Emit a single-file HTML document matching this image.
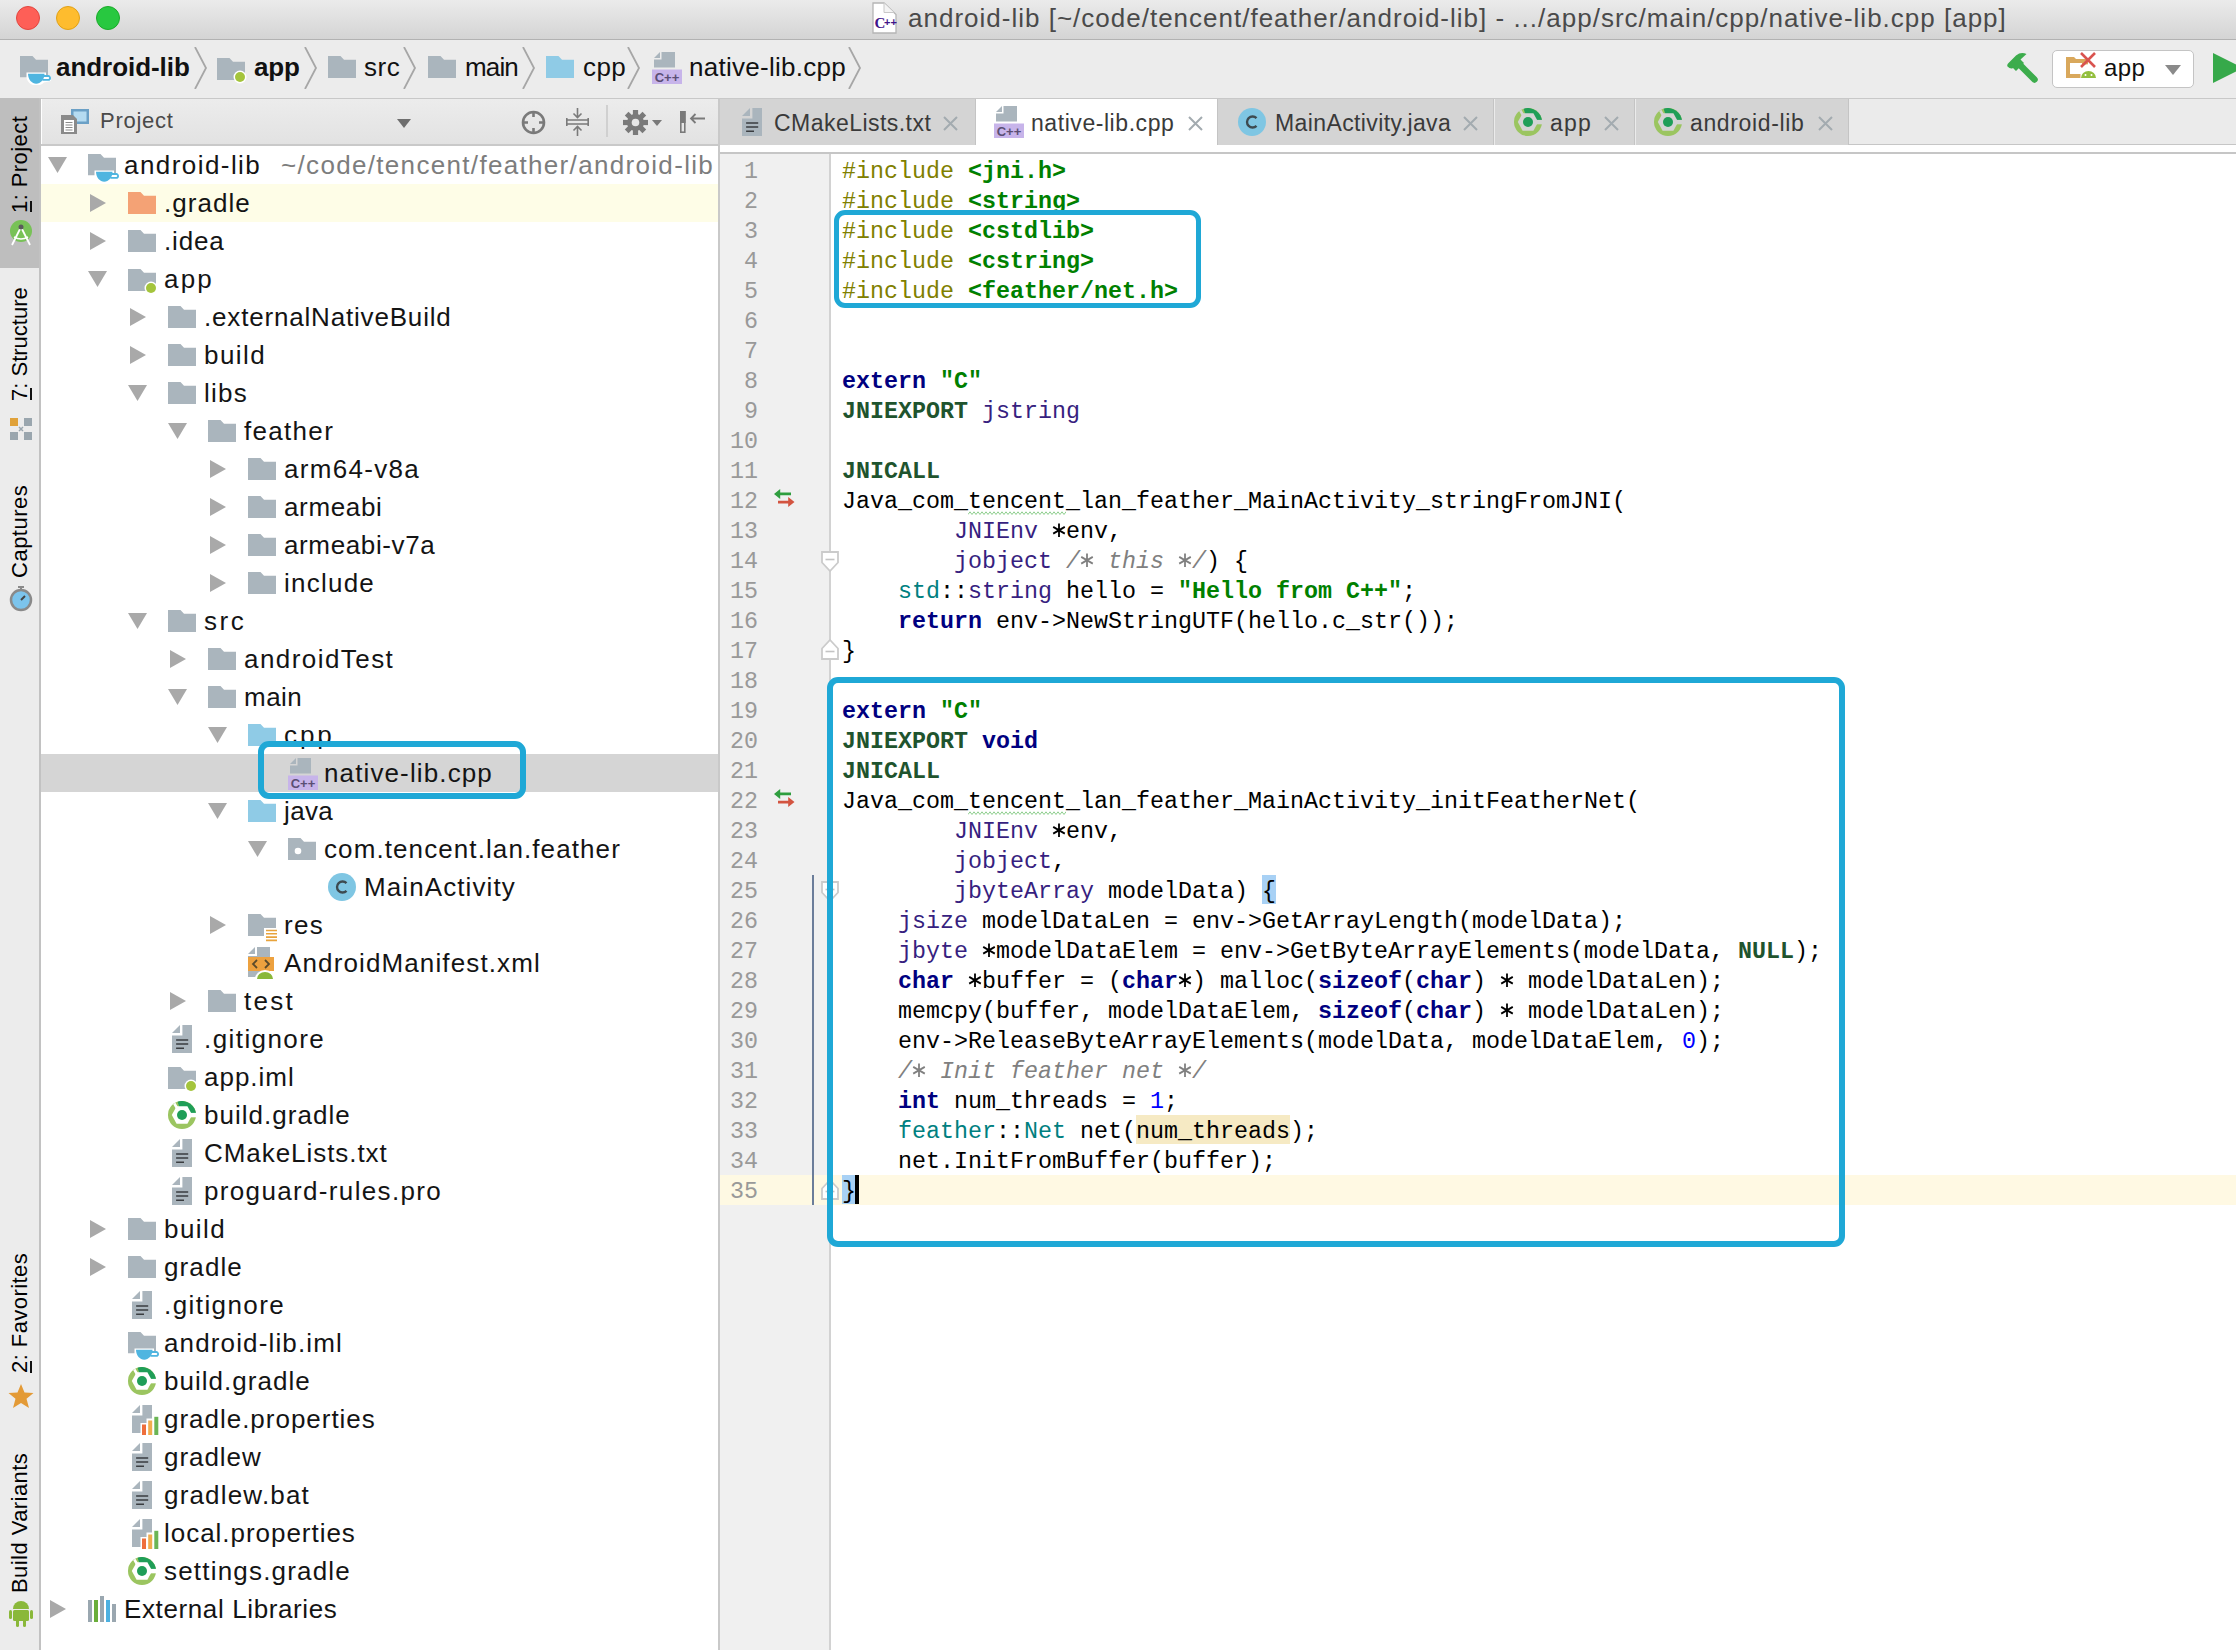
<!DOCTYPE html>
<html><head><meta charset="utf-8"><style>
html,body{margin:0;padding:0;width:2236px;height:1650px;overflow:hidden;background:#fff}
body{position:relative;font-family:'Liberation Sans', sans-serif}
.r{position:absolute;display:block}
.t{position:absolute;white-space:pre}
.code{position:absolute;font-family:'Liberation Mono', monospace;font-size:23.33px;line-height:30px;white-space:pre;color:#000}
.ast{display:inline-block;vertical-align:top;width:14px;height:30px}
.lnum{position:absolute;font-family:'Liberation Mono', monospace;font-size:23.33px;line-height:30px;color:#999;text-align:right}
</style></head><body>

<svg width="0" height="0" style="position:absolute">
<defs>
<symbol id="folder" viewBox="0 0 28 22"><path d="M0 0H12.5L16 3.7H28V22H0Z" fill="#aab5bd"/></symbol>
<symbol id="folderB" viewBox="0 0 28 22"><path d="M0 0H12.5L16 3.7H28V22H0Z" fill="#8fcbe6"/></symbol>
<symbol id="folderO" viewBox="0 0 28 22"><path d="M0 0H12.5L16 3.7H28V22H0Z" fill="#f4a275"/></symbol>
<symbol id="folderPkg" viewBox="0 0 28 22"><path d="M0 0H12.5L16 3.7H28V22H0Z" fill="#aab5bd"/><circle cx="10" cy="13" r="3.3" fill="#fff"/></symbol>
<symbol id="folderMod" viewBox="0 0 31 29"><path d="M0 0H12.5L16 3.7H28V21.3H0Z" fill="#aab5bd"/><path d="M6.5 16.5H26V19.5L31 20.5V25L24 26.5Q21 29.5 16.5 29.5Q9 29.5 6.5 22Z" fill="#fff"/><path d="M8 17.7H24.5C24.5 23.5 20.5 27.7 16.2 27.7C12 27.7 8 23.5 8 17.7Z" fill="#4fb5e0"/><path d="M23.5 20H28.2A1.9 1.9 0 0 1 28.2 23.8H22.5" fill="none" stroke="#4fb5e0" stroke-width="1.8"/></symbol>
<symbol id="folderApp" viewBox="0 0 30 26"><path d="M0 0H12.5L16 3.7H28V22H0Z" fill="#aab5bd"/><circle cx="23" cy="19" r="6.5" fill="#fff"/><circle cx="23" cy="19" r="5" fill="#a4c43c"/></symbol>
<symbol id="folderRes" viewBox="0 0 30 28"><path d="M0 0H12.5L16 3.7H28V22H0Z" fill="#aab5bd"/><rect x="16" y="14" width="14" height="14" fill="#fff"/><g stroke="#e8a33c" stroke-width="1.6"><path d="M18 16.5H29M18 19.8H29M18 23.1H29M18 26.4H29"/></g></symbol>
<symbol id="txtfile" viewBox="0 0 20 28"><path d="M10.4 0H20V28H0V10.4H10.4Z" fill="#aab5bd"/><path d="M0 8L8 0V8Z" fill="#aab5bd"/><g stroke="#3a3d40" stroke-width="1.5"><path d="M4.1 15H16.2M4.1 19.1H16.2M4.1 23.2H12"/></g></symbol>
<symbol id="propfile" viewBox="0 0 27 30"><path d="M10.4 0H20V28H0V10.4H10.4Z" fill="#aab5bd"/><path d="M0 8L8 0V8Z" fill="#aab5bd"/><path d="M8.5 30V18H14.5V13.5H20.5V10H27V30Z" fill="#fff"/><rect x="10" y="19.5" width="4" height="10.5" fill="#ee6f3d"/><rect x="16.2" y="15.5" width="4" height="14.5" fill="#f0ad4e"/><rect x="22.3" y="11.8" width="4" height="18.2" fill="#6bb555"/></symbol>
<symbol id="cppfile" viewBox="0 0 30 32"><path d="M9.5 0H23V15.5H2V7.5H9.5Z" fill="#aab5bd"/><path d="M2 6L8 0V6Z" fill="#aab5bd"/><rect x="0" y="17.5" width="30" height="14.5" fill="#c7b4ea"/><text x="15" y="30" font-family="Liberation Sans" font-size="13" font-weight="700" fill="#5a4e73" text-anchor="middle">C++</text></symbol>
<symbol id="jclass" viewBox="0 0 28 28"><circle cx="14" cy="14" r="14" fill="#7fc6e3"/><path d="M18.5 10.2A5.5 5.5 0 1 0 18.5 17.8" fill="none" stroke="#3d4a50" stroke-width="2.4"/></symbol>
<symbol id="gradle" viewBox="0 0 28 28"><mask id="gm"><rect width="28" height="28" fill="#fff"/><path d="M3.8 14L8.6 5.2H19.4L24.2 14L19.4 22.8H8.6Z" fill="#000"/><rect x="19" y="11.9" width="10" height="4.4" fill="#000"/><path d="M6.3 2.3L10.3 9.5" stroke="#000" stroke-width="2.6"/></mask><g mask="url(#gm)"><circle cx="14" cy="14" r="14" fill="#9bc560"/><path d="M14 14L9.6 0.7A14 14 0 0 1 28 14Z" fill="#1f9e58"/></g><circle cx="14" cy="14" r="5" fill="#1f9e58"/></symbol>
<symbol id="manifest" viewBox="0 0 30 32"><path d="M9 0H22V30H0V9H9Z" fill="#aab5bd"/><path d="M0 7L7 0V7Z" fill="#aab5bd"/><rect x="0" y="10" width="26" height="14" fill="#eda13f"/><path d="M9 13L5 17L9 21M17 13L21 17L17 21" fill="none" stroke="#5b4a2b" stroke-width="1.8"/><path d="M7 32A9 8 0 0 1 27 32Z" fill="#fff"/><path d="M9 32A8 7 0 0 1 25 32Z" fill="#8ab83a"/></symbol>
<symbol id="extlib" viewBox="0 0 28 26"><rect x="0" y="4" width="4" height="22" fill="#9aa7b0"/><rect x="6" y="4" width="4" height="22" fill="#6aae3a"/><rect x="12" y="0" width="4" height="26" fill="#9aa7b0"/><rect x="18" y="4" width="4" height="22" fill="#4cb0e0"/><rect x="24" y="8" width="4" height="18" fill="#9aa7b0"/></symbol>
<symbol id="triR" viewBox="0 0 16 18"><path d="M0 0L16 9L0 18Z" fill="#a9a9a9"/></symbol>
<symbol id="triD" viewBox="0 0 19 16"><path d="M0 0H19L9.5 16Z" fill="#a9a9a9"/></symbol>
<symbol id="chev" viewBox="0 0 14 42"><path d="M1 0L12 21L1 42" fill="none" stroke="#a6a6a6" stroke-width="1.8"/></symbol>
<symbol id="closeX" viewBox="0 0 15 15"><path d="M1 1L14 14M14 1L1 14" fill="none" stroke="#a3abb0" stroke-width="2"/></symbol>
</defs>
</svg>

<div class="r" style="left:0px;top:0px;width:2236px;height:39px;background:linear-gradient(#ebebeb,#d4d4d4)"></div>
<div class="r" style="left:0px;top:39px;width:2236px;height:1px;background:#b2b2b2"></div>
<div class="r" style="left:16px;top:6px;width:24px;height:24px;background:#fe5f57;border-radius:50%;box-sizing:border-box;border:1px solid #e2463f"></div>
<div class="r" style="left:56px;top:6px;width:24px;height:24px;background:#febc2e;border-radius:50%;box-sizing:border-box;border:1px solid #e1a116"></div>
<div class="r" style="left:96px;top:6px;width:24px;height:24px;background:#28c840;border-radius:50%;box-sizing:border-box;border:1px solid #1aab29"></div>
<svg class="r" style="left:871px;top:1px" width="27" height="34" viewBox="0 0 27 34"><path d="M2 2H13L25 13.5V32H2Z" fill="#fff" stroke="#b5b5b5" stroke-width="1.3"/><path d="M13 2V11.5H23" fill="#f4f4f4" stroke="#c8c8c8" stroke-width="1"/><text x="3.5" y="27" font-family="Liberation Serif" font-size="15" font-weight="700" fill="#3f1489">C</text><text x="13" y="25" font-family="Liberation Sans" font-size="11" font-weight="700" fill="#3f1489">++</text></svg>
<div class="t" style="left:908px;top:3.49px;height:31px;line-height:31px;font-family:'Liberation Sans', sans-serif;font-size:26px;font-weight:400;color:#4a4a4a;letter-spacing:1.002px;">android-lib [~/code/tencent/feather/android-lib] - .../app/src/main/cpp/native-lib.cpp [app]</div>
<div class="r" style="left:0px;top:40px;width:2236px;height:58px;background:#ececec"></div>
<div class="r" style="left:0px;top:98px;width:2236px;height:1px;background:#d0d0d0"></div>
<svg class="r" style="left:20px;top:56px;" width="31" height="29"><use href="#folderMod"/></svg>
<div class="t" style="left:56px;top:52.49px;height:31px;line-height:31px;font-family:'Liberation Sans', sans-serif;font-size:26px;font-weight:700;color:#111;letter-spacing:-0.053px;">android-lib</div>
<svg class="r" style="left:194px;top:47px;" width="14" height="42"><use href="#chev"/></svg>
<svg class="r" style="left:217px;top:57.5px;" width="30" height="26"><use href="#folderApp"/></svg>
<div class="t" style="left:254px;top:52.49px;height:31px;line-height:31px;font-family:'Liberation Sans', sans-serif;font-size:26px;font-weight:700;color:#111;letter-spacing:-0.217px;">app</div>
<svg class="r" style="left:304px;top:47px;" width="14" height="42"><use href="#chev"/></svg>
<svg class="r" style="left:328px;top:56px;" width="28" height="22"><use href="#folder"/></svg>
<div class="t" style="left:364px;top:52.49px;height:31px;line-height:31px;font-family:'Liberation Sans', sans-serif;font-size:26px;font-weight:400;color:#111;letter-spacing:0.564px;">src</div>
<svg class="r" style="left:403px;top:47px;" width="14" height="42"><use href="#chev"/></svg>
<svg class="r" style="left:428px;top:56px;" width="28" height="22"><use href="#folder"/></svg>
<div class="t" style="left:465px;top:52.49px;height:31px;line-height:31px;font-family:'Liberation Sans', sans-serif;font-size:26px;font-weight:400;color:#111;letter-spacing:-0.853px;">main</div>
<svg class="r" style="left:522px;top:47px;" width="14" height="42"><use href="#chev"/></svg>
<svg class="r" style="left:546px;top:56px;" width="28" height="22"><use href="#folderB"/></svg>
<div class="t" style="left:583px;top:52.49px;height:31px;line-height:31px;font-family:'Liberation Sans', sans-serif;font-size:26px;font-weight:400;color:#111;letter-spacing:0.439px;">cpp</div>
<svg class="r" style="left:627px;top:47px;" width="14" height="42"><use href="#chev"/></svg>
<svg class="r" style="left:652px;top:52px;" width="30" height="32"><use href="#cppfile"/></svg>
<div class="t" style="left:689px;top:52.49px;height:31px;line-height:31px;font-family:'Liberation Sans', sans-serif;font-size:26px;font-weight:400;color:#111;letter-spacing:0.277px;">native-lib.cpp</div>
<svg class="r" style="left:848px;top:47px;" width="14" height="42"><use href="#chev"/></svg>
<svg class="r" style="left:2006px;top:52px" width="34" height="32" viewBox="0 0 34 32"><path d="M14 13L28.5 27.5" stroke="#3cac4c" stroke-width="6.5" stroke-linecap="round"/><path d="M1.5 14.5Q0.5 12.5 3 10.5L10 3.5Q15 -0.5 20.5 2L14.5 7.5L18 11L10 19L7 16Q4.5 17.5 1.5 14.5Z" fill="#3cac4c"/></svg>
<div class="r" style="left:2052px;top:50px;width:142px;height:38px;background:#fff;border:1px solid #c4c4c4;border-radius:5px;box-sizing:border-box"></div>
<svg class="r" style="left:2064px;top:50px" width="34" height="30" viewBox="0 0 34 30"><path d="M2 7H10L12 9H24V28H2Z" fill="#d9a85c"/><path d="M6 13H18V24H6Z" fill="#fff"/><path d="M16.5 20A8 7.5 0 0 1 32 20V28H16.5Z" fill="#fff"/><path d="M17 28A7.5 7 0 0 1 32 28Z" fill="#93bf3e"/><circle cx="21.5" cy="25" r="1" fill="#fff"/><circle cx="27.5" cy="25" r="1" fill="#fff"/><path d="M17 3L31 17M31 3L17 17" stroke="#d9534f" stroke-width="2.6"/></svg>
<div class="t" style="left:2104px;top:53.18px;height:29px;line-height:29px;font-family:'Liberation Sans', sans-serif;font-size:24px;font-weight:400;color:#111;letter-spacing:0.377px;">app</div>
<svg class="r" style="left:2165px;top:65px" width="16" height="10"><path d="M0 0H16L8 10Z" fill="#8a8a8a"/></svg>
<svg class="r" style="left:2213px;top:53px" width="23" height="30"><path d="M0 0L30 15L0 30Z" fill="#36a94a"/></svg>
<div class="r" style="left:0px;top:98px;width:40px;height:1552px;background:#ececec"></div>
<div class="r" style="left:0px;top:98px;width:39px;height:170px;background:#bebebe"></div>
<div class="r" style="left:39px;top:98px;width:2px;height:1552px;background:#c2c2c2"></div>
<div class="t" style="left:7.37px;top:213px;height:26px;line-height:26px;font-size:22px;color:#000;letter-spacing:0.429px;transform-origin:0 0;transform:rotate(-90deg)">1: Project</div>
<div class="r" style="left:30px;top:201px;width:1.8px;height:11px;background:#111"></div>
<div class="r" style="left:30px;top:388px;width:1.8px;height:12px;background:#111"></div>
<div class="r" style="left:30px;top:1361px;width:1.8px;height:12px;background:#111"></div>
<svg class="r" style="left:9px;top:220px" width="24" height="27" viewBox="0 0 24 27"><circle cx="12" cy="11" r="11" fill="#78c257"/><path d="M3 25L12 7L21 25" fill="none" stroke="#fff" stroke-width="1.8"/><path d="M5 17Q12 21 19 17" fill="none" stroke="#fff" stroke-width="1.6"/><circle cx="12" cy="7" r="2.5" fill="#5b5b5b"/></svg>
<div class="t" style="left:7.37px;top:401px;height:26px;line-height:26px;font-size:22px;color:#000;letter-spacing:0.007px;transform-origin:0 0;transform:rotate(-90deg)">7: Structure</div>
<svg class="r" style="left:10px;top:418px" width="22" height="22" viewBox="0 0 22 22"><rect x="0" y="0" width="8" height="8" fill="#e0a23a"/><rect x="14" y="0" width="8" height="8" fill="#9aa6ae"/><rect x="0" y="14" width="8" height="8" fill="#9aa6ae"/><rect x="14" y="14" width="8" height="8" fill="#9aa6ae"/><path d="M9 9L13 13M13 9L9 13" stroke="#9aa6ae" stroke-width="1.5"/></svg>
<div class="t" style="left:7.37px;top:578px;height:26px;line-height:26px;font-size:22px;color:#000;letter-spacing:0.503px;transform-origin:0 0;transform:rotate(-90deg)">Captures</div>
<svg class="r" style="left:9px;top:585px" width="24" height="27" viewBox="0 0 24 27"><circle cx="12" cy="15" r="10" fill="#7cc4ec" stroke="#8a8a8a" stroke-width="2.5"/><path d="M9 2H15M12 2V5" stroke="#8a8a8a" stroke-width="2"/><path d="M12 15L16 11" stroke="#444" stroke-width="2"/></svg>
<div class="t" style="left:7.37px;top:1373px;height:26px;line-height:26px;font-size:22px;color:#000;letter-spacing:0.442px;transform-origin:0 0;transform:rotate(-90deg)">2: Favorites</div>
<svg class="r" style="left:8px;top:1383px" width="26" height="26" viewBox="0 0 26 26"><path d="M13 1L16.5 9.5L25.5 10L18.5 15.8L21 25L13 20L5 25L7.5 15.8L0.5 10L9.5 9.5Z" fill="#e39a36"/></svg>
<div class="t" style="left:7.37px;top:1593px;height:26px;line-height:26px;font-size:22px;color:#000;letter-spacing:0.438px;transform-origin:0 0;transform:rotate(-90deg)">Build Variants</div>
<svg class="r" style="left:9px;top:1597px" width="24" height="30" viewBox="0 0 24 30"><path d="M4 12A8 8 0 0 1 20 12Z" fill="#8ab83a"/><rect x="4" y="13" width="16" height="11" rx="1.5" fill="#8ab83a"/><rect x="0" y="13" width="3" height="9" rx="1.5" fill="#8ab83a"/><rect x="21" y="13" width="3" height="9" rx="1.5" fill="#8ab83a"/><rect x="7" y="22" width="3" height="8" rx="1.5" fill="#8ab83a"/><rect x="14" y="22" width="3" height="8" rx="1.5" fill="#8ab83a"/></svg>
<div class="r" style="left:41px;top:98px;width:677px;height:1552px;background:#fff"></div>
<div class="r" style="left:41px;top:98px;width:677px;height:1px;background:#c8c8c8"></div>
<div class="r" style="left:42px;top:99px;width:676px;height:46px;background:linear-gradient(#ececec,#e2e2e2)"></div>
<div class="r" style="left:41px;top:144px;width:677px;height:2px;background:#c9c9c9"></div>
<div class="r" style="left:718px;top:98px;width:2px;height:1552px;background:#c9c9c9"></div>
<svg class="r" style="left:61px;top:109px" width="30" height="26" viewBox="0 0 30 26"><rect x="10" y="0" width="18" height="15" fill="#6ba0c6"/><rect x="12.5" y="2.5" width="13" height="10" fill="#b5dbf1"/><path d="M0 6H12L16 10V25H0Z" fill="#8a8a8a"/><rect x="3" y="11" width="10" height="12" fill="#fff"/><path d="M4.5 13.5H11.5M4.5 16H11.5M4.5 18.5H11.5M4.5 21H11.5" stroke="#8a8a8a" stroke-width="1.1"/></svg>
<div class="t" style="left:100px;top:108.37px;height:26px;line-height:26px;font-family:'Liberation Sans', sans-serif;font-size:22px;font-weight:400;color:#4a4a4a;letter-spacing:0.719px;">Project</div>
<svg class="r" style="left:397px;top:119px" width="14" height="9"><path d="M0 0H14L7 9Z" fill="#6e6e6e"/></svg>
<svg class="r" style="left:521px;top:110px" width="25" height="25" viewBox="0 0 25 25"><circle cx="12.5" cy="12.5" r="10.5" fill="none" stroke="#7a7a7a" stroke-width="2.6"/><path d="M12.5 1V7M12.5 18V24M1 12.5H7M18 12.5H24" stroke="#7a7a7a" stroke-width="2.6"/></svg>
<svg class="r" style="left:566px;top:108px" width="23" height="28" viewBox="0 0 23 28"><path d="M0 12H23M0 16H23" stroke="#7a7a7a" stroke-width="1.6"/><path d="M0.8 10V18M22.2 10V18" stroke="#7a7a7a" stroke-width="1.6"/><path d="M11.5 0V9M7.5 5.5L11.5 9.5L15.5 5.5M11.5 28V19M7.5 22.5L11.5 18.5L15.5 22.5" fill="none" stroke="#7a7a7a" stroke-width="1.6"/></svg>
<div class="r" style="left:606px;top:105px;width:1.5px;height:32px;background:#d0d0d0"></div>
<svg class="r" style="left:623px;top:110px" width="40" height="25" viewBox="0 0 40 25"><g transform="translate(12.5 12.5)" fill="#7a7a7a"><circle r="8.5"/><g id="gt"><rect x="-2.6" y="-12.5" width="5.2" height="6"/></g><use href="#gt" transform="rotate(45)"/><use href="#gt" transform="rotate(90)"/><use href="#gt" transform="rotate(135)"/><use href="#gt" transform="rotate(180)"/><use href="#gt" transform="rotate(225)"/><use href="#gt" transform="rotate(270)"/><use href="#gt" transform="rotate(315)"/></g><circle cx="12.5" cy="12.5" r="3.8" fill="#e7e7e7"/><path d="M29 10H39L34 16Z" fill="#7a7a7a"/></svg>
<svg class="r" style="left:680px;top:111px" width="25" height="22" viewBox="0 0 25 22"><rect x="0.8" y="0.8" width="4" height="20.4" fill="none" stroke="#7a7a7a" stroke-width="1.6"/><rect x="0" y="0" width="5.6" height="12" fill="#7a7a7a"/><path d="M25 7.5H11M15.5 3L11 7.5L15.5 12" fill="none" stroke="#7a7a7a" stroke-width="1.8"/></svg>
<div class="r" style="left:41px;top:184px;width:677px;height:38px;background:#fefde7"></div>
<div class="r" style="left:41px;top:754px;width:677px;height:38px;background:#d5d5d5"></div>
<svg class="r" style="left:48px;top:157px;" width="19" height="16"><use href="#triD"/></svg>
<svg class="r" style="left:88px;top:154px;" width="31" height="29"><use href="#folderMod"/></svg>
<div class="t" style="left:124px;top:150.49px;height:31px;line-height:31px;font-family:'Liberation Sans', sans-serif;font-size:26px;font-weight:400;color:#141414;letter-spacing:1.439px;">android-lib</div>
<svg class="r" style="left:90px;top:194px;" width="16" height="18"><use href="#triR"/></svg>
<svg class="r" style="left:128px;top:192px;" width="28" height="22"><use href="#folderO"/></svg>
<div class="t" style="left:164px;top:188.49px;height:31px;line-height:31px;font-family:'Liberation Sans', sans-serif;font-size:26px;font-weight:400;color:#141414;letter-spacing:1.050px;">.gradle</div>
<svg class="r" style="left:90px;top:232px;" width="16" height="18"><use href="#triR"/></svg>
<svg class="r" style="left:128px;top:230px;" width="28" height="22"><use href="#folder"/></svg>
<div class="t" style="left:164px;top:226.49px;height:31px;line-height:31px;font-family:'Liberation Sans', sans-serif;font-size:26px;font-weight:400;color:#141414;letter-spacing:0.852px;">.idea</div>
<svg class="r" style="left:88px;top:271px;" width="19" height="16"><use href="#triD"/></svg>
<svg class="r" style="left:128px;top:269px;" width="30" height="26"><use href="#folderApp"/></svg>
<div class="t" style="left:164px;top:264.49px;height:31px;line-height:31px;font-family:'Liberation Sans', sans-serif;font-size:26px;font-weight:400;color:#141414;letter-spacing:2.205px;">app</div>
<svg class="r" style="left:130px;top:308px;" width="16" height="18"><use href="#triR"/></svg>
<svg class="r" style="left:168px;top:306px;" width="28" height="22"><use href="#folder"/></svg>
<div class="t" style="left:204px;top:302.49px;height:31px;line-height:31px;font-family:'Liberation Sans', sans-serif;font-size:26px;font-weight:400;color:#141414;letter-spacing:0.819px;">.externalNativeBuild</div>
<svg class="r" style="left:130px;top:346px;" width="16" height="18"><use href="#triR"/></svg>
<svg class="r" style="left:168px;top:344px;" width="28" height="22"><use href="#folder"/></svg>
<div class="t" style="left:204px;top:340.49px;height:31px;line-height:31px;font-family:'Liberation Sans', sans-serif;font-size:26px;font-weight:400;color:#141414;letter-spacing:1.466px;">build</div>
<svg class="r" style="left:128px;top:385px;" width="19" height="16"><use href="#triD"/></svg>
<svg class="r" style="left:168px;top:382px;" width="28" height="22"><use href="#folder"/></svg>
<div class="t" style="left:204px;top:378.49px;height:31px;line-height:31px;font-family:'Liberation Sans', sans-serif;font-size:26px;font-weight:400;color:#141414;letter-spacing:1.261px;">libs</div>
<svg class="r" style="left:168px;top:423px;" width="19" height="16"><use href="#triD"/></svg>
<svg class="r" style="left:208px;top:420px;" width="28" height="22"><use href="#folder"/></svg>
<div class="t" style="left:244px;top:416.49px;height:31px;line-height:31px;font-family:'Liberation Sans', sans-serif;font-size:26px;font-weight:400;color:#141414;letter-spacing:1.308px;">feather</div>
<svg class="r" style="left:210px;top:460px;" width="16" height="18"><use href="#triR"/></svg>
<svg class="r" style="left:248px;top:458px;" width="28" height="22"><use href="#folder"/></svg>
<div class="t" style="left:284px;top:454.49px;height:31px;line-height:31px;font-family:'Liberation Sans', sans-serif;font-size:26px;font-weight:400;color:#141414;letter-spacing:1.315px;">arm64-v8a</div>
<svg class="r" style="left:210px;top:498px;" width="16" height="18"><use href="#triR"/></svg>
<svg class="r" style="left:248px;top:496px;" width="28" height="22"><use href="#folder"/></svg>
<div class="t" style="left:284px;top:492.49px;height:31px;line-height:31px;font-family:'Liberation Sans', sans-serif;font-size:26px;font-weight:400;color:#141414;letter-spacing:0.644px;">armeabi</div>
<svg class="r" style="left:210px;top:536px;" width="16" height="18"><use href="#triR"/></svg>
<svg class="r" style="left:248px;top:534px;" width="28" height="22"><use href="#folder"/></svg>
<div class="t" style="left:284px;top:530.49px;height:31px;line-height:31px;font-family:'Liberation Sans', sans-serif;font-size:26px;font-weight:400;color:#141414;letter-spacing:0.628px;">armeabi-v7a</div>
<svg class="r" style="left:210px;top:574px;" width="16" height="18"><use href="#triR"/></svg>
<svg class="r" style="left:248px;top:572px;" width="28" height="22"><use href="#folder"/></svg>
<div class="t" style="left:284px;top:568.49px;height:31px;line-height:31px;font-family:'Liberation Sans', sans-serif;font-size:26px;font-weight:400;color:#141414;letter-spacing:1.232px;">include</div>
<svg class="r" style="left:128px;top:613px;" width="19" height="16"><use href="#triD"/></svg>
<svg class="r" style="left:168px;top:610px;" width="28" height="22"><use href="#folder"/></svg>
<div class="t" style="left:204px;top:606.49px;height:31px;line-height:31px;font-family:'Liberation Sans', sans-serif;font-size:26px;font-weight:400;color:#141414;letter-spacing:2.564px;">src</div>
<svg class="r" style="left:170px;top:650px;" width="16" height="18"><use href="#triR"/></svg>
<svg class="r" style="left:208px;top:648px;" width="28" height="22"><use href="#folder"/></svg>
<div class="t" style="left:244px;top:644.49px;height:31px;line-height:31px;font-family:'Liberation Sans', sans-serif;font-size:26px;font-weight:400;color:#141414;letter-spacing:1.438px;">androidTest</div>
<svg class="r" style="left:168px;top:689px;" width="19" height="16"><use href="#triD"/></svg>
<svg class="r" style="left:208px;top:686px;" width="28" height="22"><use href="#folder"/></svg>
<div class="t" style="left:244px;top:682.49px;height:31px;line-height:31px;font-family:'Liberation Sans', sans-serif;font-size:26px;font-weight:400;color:#141414;letter-spacing:0.480px;">main</div>
<svg class="r" style="left:208px;top:727px;" width="19" height="16"><use href="#triD"/></svg>
<svg class="r" style="left:248px;top:724px;" width="28" height="22"><use href="#folderB"/></svg>
<div class="t" style="left:284px;top:720.49px;height:31px;line-height:31px;font-family:'Liberation Sans', sans-serif;font-size:26px;font-weight:400;color:#141414;letter-spacing:2.939px;">cpp</div>
<svg class="r" style="left:288px;top:758px;" width="30" height="32"><use href="#cppfile"/></svg>
<div class="t" style="left:324px;top:758.49px;height:31px;line-height:31px;font-family:'Liberation Sans', sans-serif;font-size:26px;font-weight:400;color:#141414;letter-spacing:1.123px;">native-lib.cpp</div>
<svg class="r" style="left:208px;top:803px;" width="19" height="16"><use href="#triD"/></svg>
<svg class="r" style="left:248px;top:800px;" width="28" height="22"><use href="#folderB"/></svg>
<div class="t" style="left:284px;top:796.49px;height:31px;line-height:31px;font-family:'Liberation Sans', sans-serif;font-size:26px;font-weight:400;color:#141414;letter-spacing:0.366px;">java</div>
<svg class="r" style="left:248px;top:841px;" width="19" height="16"><use href="#triD"/></svg>
<svg class="r" style="left:288px;top:838px;" width="28" height="22"><use href="#folderPkg"/></svg>
<div class="t" style="left:324px;top:834.49px;height:31px;line-height:31px;font-family:'Liberation Sans', sans-serif;font-size:26px;font-weight:400;color:#141414;letter-spacing:1.095px;">com.tencent.lan.feather</div>
<svg class="r" style="left:328px;top:873px;" width="28" height="28"><use href="#jclass"/></svg>
<div class="t" style="left:364px;top:872.49px;height:31px;line-height:31px;font-family:'Liberation Sans', sans-serif;font-size:26px;font-weight:400;color:#141414;letter-spacing:1.100px;">MainActivity</div>
<svg class="r" style="left:210px;top:916px;" width="16" height="18"><use href="#triR"/></svg>
<svg class="r" style="left:248px;top:914px;" width="30" height="28"><use href="#folderRes"/></svg>
<div class="t" style="left:284px;top:910.49px;height:31px;line-height:31px;font-family:'Liberation Sans', sans-serif;font-size:26px;font-weight:400;color:#141414;letter-spacing:1.337px;">res</div>
<svg class="r" style="left:248px;top:947px;" width="30" height="32"><use href="#manifest"/></svg>
<div class="t" style="left:284px;top:948.49px;height:31px;line-height:31px;font-family:'Liberation Sans', sans-serif;font-size:26px;font-weight:400;color:#141414;letter-spacing:1.125px;">AndroidManifest.xml</div>
<svg class="r" style="left:170px;top:992px;" width="16" height="18"><use href="#triR"/></svg>
<svg class="r" style="left:208px;top:990px;" width="28" height="22"><use href="#folder"/></svg>
<div class="t" style="left:244px;top:986.49px;height:31px;line-height:31px;font-family:'Liberation Sans', sans-serif;font-size:26px;font-weight:400;color:#141414;letter-spacing:2.293px;">test</div>
<svg class="r" style="left:172px;top:1025px;" width="20" height="28"><use href="#txtfile"/></svg>
<div class="t" style="left:204px;top:1024.49px;height:31px;line-height:31px;font-family:'Liberation Sans', sans-serif;font-size:26px;font-weight:400;color:#141414;letter-spacing:1.426px;">.gitignore</div>
<svg class="r" style="left:168px;top:1067px;" width="30" height="26"><use href="#folderApp"/></svg>
<div class="t" style="left:204px;top:1062.49px;height:31px;line-height:31px;font-family:'Liberation Sans', sans-serif;font-size:26px;font-weight:400;color:#141414;letter-spacing:0.995px;">app.iml</div>
<svg class="r" style="left:168px;top:1101px;" width="28" height="28"><use href="#gradle"/></svg>
<div class="t" style="left:204px;top:1100.49px;height:31px;line-height:31px;font-family:'Liberation Sans', sans-serif;font-size:26px;font-weight:400;color:#141414;letter-spacing:1.033px;">build.gradle</div>
<svg class="r" style="left:172px;top:1139px;" width="20" height="28"><use href="#txtfile"/></svg>
<div class="t" style="left:204px;top:1138.49px;height:31px;line-height:31px;font-family:'Liberation Sans', sans-serif;font-size:26px;font-weight:400;color:#141414;letter-spacing:0.946px;">CMakeLists.txt</div>
<svg class="r" style="left:172px;top:1177px;" width="20" height="28"><use href="#txtfile"/></svg>
<div class="t" style="left:204px;top:1176.49px;height:31px;line-height:31px;font-family:'Liberation Sans', sans-serif;font-size:26px;font-weight:400;color:#141414;letter-spacing:1.348px;">proguard-rules.pro</div>
<svg class="r" style="left:90px;top:1220px;" width="16" height="18"><use href="#triR"/></svg>
<svg class="r" style="left:128px;top:1218px;" width="28" height="22"><use href="#folder"/></svg>
<div class="t" style="left:164px;top:1214.49px;height:31px;line-height:31px;font-family:'Liberation Sans', sans-serif;font-size:26px;font-weight:400;color:#141414;letter-spacing:1.466px;">build</div>
<svg class="r" style="left:90px;top:1258px;" width="16" height="18"><use href="#triR"/></svg>
<svg class="r" style="left:128px;top:1256px;" width="28" height="22"><use href="#folder"/></svg>
<div class="t" style="left:164px;top:1252.49px;height:31px;line-height:31px;font-family:'Liberation Sans', sans-serif;font-size:26px;font-weight:400;color:#141414;letter-spacing:1.104px;">gradle</div>
<svg class="r" style="left:132px;top:1291px;" width="20" height="28"><use href="#txtfile"/></svg>
<div class="t" style="left:164px;top:1290.49px;height:31px;line-height:31px;font-family:'Liberation Sans', sans-serif;font-size:26px;font-weight:400;color:#141414;letter-spacing:1.426px;">.gitignore</div>
<svg class="r" style="left:128px;top:1332px;" width="31" height="29"><use href="#folderMod"/></svg>
<div class="t" style="left:164px;top:1328.49px;height:31px;line-height:31px;font-family:'Liberation Sans', sans-serif;font-size:26px;font-weight:400;color:#141414;letter-spacing:1.140px;">android-lib.iml</div>
<svg class="r" style="left:128px;top:1367px;" width="28" height="28"><use href="#gradle"/></svg>
<div class="t" style="left:164px;top:1366.49px;height:31px;line-height:31px;font-family:'Liberation Sans', sans-serif;font-size:26px;font-weight:400;color:#141414;letter-spacing:1.033px;">build.gradle</div>
<svg class="r" style="left:132px;top:1405px;" width="27" height="30"><use href="#propfile"/></svg>
<div class="t" style="left:164px;top:1404.49px;height:31px;line-height:31px;font-family:'Liberation Sans', sans-serif;font-size:26px;font-weight:400;color:#141414;letter-spacing:0.980px;">gradle.properties</div>
<svg class="r" style="left:132px;top:1443px;" width="20" height="28"><use href="#txtfile"/></svg>
<div class="t" style="left:164px;top:1442.49px;height:31px;line-height:31px;font-family:'Liberation Sans', sans-serif;font-size:26px;font-weight:400;color:#141414;letter-spacing:0.956px;">gradlew</div>
<svg class="r" style="left:132px;top:1481px;" width="20" height="28"><use href="#txtfile"/></svg>
<div class="t" style="left:164px;top:1480.49px;height:31px;line-height:31px;font-family:'Liberation Sans', sans-serif;font-size:26px;font-weight:400;color:#141414;letter-spacing:1.182px;">gradlew.bat</div>
<svg class="r" style="left:132px;top:1519px;" width="27" height="30"><use href="#propfile"/></svg>
<div class="t" style="left:164px;top:1518.49px;height:31px;line-height:31px;font-family:'Liberation Sans', sans-serif;font-size:26px;font-weight:400;color:#141414;letter-spacing:0.966px;">local.properties</div>
<svg class="r" style="left:128px;top:1557px;" width="28" height="28"><use href="#gradle"/></svg>
<div class="t" style="left:164px;top:1556.49px;height:31px;line-height:31px;font-family:'Liberation Sans', sans-serif;font-size:26px;font-weight:400;color:#141414;letter-spacing:1.192px;">settings.gradle</div>
<svg class="r" style="left:50px;top:1600px;" width="16" height="18"><use href="#triR"/></svg>
<svg class="r" style="left:88px;top:1596px;" width="28" height="26"><use href="#extlib"/></svg>
<div class="t" style="left:124px;top:1594.49px;height:31px;line-height:31px;font-family:'Liberation Sans', sans-serif;font-size:26px;font-weight:400;color:#141414;letter-spacing:0.617px;">External Libraries</div>
<div class="t" style="left:281px;top:150.49px;height:31px;line-height:31px;font-family:'Liberation Sans', sans-serif;font-size:26px;font-weight:400;color:#7d7d7d;letter-spacing:1.324px;">~/code/tencent/feather/android-lib</div>
<div class="r" style="left:720px;top:98px;width:1516px;height:1px;background:#c8c8c8"></div>
<div class="r" style="left:720px;top:99px;width:1516px;height:46px;background:#ebebeb"></div>
<div class="r" style="left:720px;top:99px;width:256px;height:46px;background:#d4d4d4"></div>
<div class="r" style="left:975px;top:99px;width:1px;height:46px;background:#c4c4c4"></div>
<svg class="r" style="left:742px;top:108px;" width="20" height="28"><use href="#txtfile"/></svg>
<div class="t" style="left:774px;top:109.03px;height:28px;line-height:28px;font-family:'Liberation Sans', sans-serif;font-size:23px;font-weight:400;color:#3a3a3a;letter-spacing:0.459px;">CMakeLists.txt</div>
<svg class="r" style="left:943px;top:116px;" width="15" height="15"><use href="#closeX"/></svg>
<div class="r" style="left:976px;top:99px;width:242px;height:46px;background:#fff"></div>
<div class="r" style="left:1217px;top:99px;width:1px;height:46px;background:#c4c4c4"></div>
<svg class="r" style="left:994px;top:106px;" width="30" height="32"><use href="#cppfile"/></svg>
<div class="t" style="left:1031px;top:109.03px;height:28px;line-height:28px;font-family:'Liberation Sans', sans-serif;font-size:23px;font-weight:400;color:#3a3a3a;letter-spacing:0.559px;">native-lib.cpp</div>
<svg class="r" style="left:1188px;top:116px;" width="15" height="15"><use href="#closeX"/></svg>
<div class="r" style="left:1218px;top:99px;width:276px;height:46px;background:#d4d4d4"></div>
<div class="r" style="left:1493px;top:99px;width:1px;height:46px;background:#c4c4c4"></div>
<svg class="r" style="left:1238px;top:108px;" width="28" height="28"><use href="#jclass"/></svg>
<div class="t" style="left:1275px;top:109.03px;height:28px;line-height:28px;font-family:'Liberation Sans', sans-serif;font-size:23px;font-weight:400;color:#3a3a3a;letter-spacing:0.389px;">MainActivity.java</div>
<svg class="r" style="left:1463px;top:116px;" width="15" height="15"><use href="#closeX"/></svg>
<div class="r" style="left:1495px;top:99px;width:140px;height:46px;background:#d4d4d4"></div>
<div class="r" style="left:1634px;top:99px;width:1px;height:46px;background:#c4c4c4"></div>
<svg class="r" style="left:1514px;top:108px;" width="28" height="28"><use href="#gradle"/></svg>
<div class="t" style="left:1550px;top:109.03px;height:28px;line-height:28px;font-family:'Liberation Sans', sans-serif;font-size:23px;font-weight:400;color:#3a3a3a;letter-spacing:1.212px;">app</div>
<svg class="r" style="left:1604px;top:116px;" width="15" height="15"><use href="#closeX"/></svg>
<div class="r" style="left:1636px;top:99px;width:213px;height:46px;background:#d4d4d4"></div>
<div class="r" style="left:1848px;top:99px;width:1px;height:46px;background:#c4c4c4"></div>
<svg class="r" style="left:1654px;top:108px;" width="28" height="28"><use href="#gradle"/></svg>
<div class="t" style="left:1690px;top:109.03px;height:28px;line-height:28px;font-family:'Liberation Sans', sans-serif;font-size:23px;font-weight:400;color:#3a3a3a;letter-spacing:0.639px;">android-lib</div>
<svg class="r" style="left:1818px;top:116px;" width="15" height="15"><use href="#closeX"/></svg>
<div class="r" style="left:1849px;top:144px;width:387px;height:1.5px;background:#c6c6c6"></div>
<div class="r" style="left:720px;top:145px;width:1516px;height:7px;background:#fff"></div>
<div class="r" style="left:720px;top:152px;width:1516px;height:2px;background:#c6c6c6"></div>
<div class="r" style="left:720px;top:154px;width:1516px;height:1496px;background:#fff"></div>
<div class="r" style="left:720px;top:154px;width:109px;height:1496px;background:#f0f0f0"></div>
<div class="r" style="left:829px;top:154px;width:2px;height:1496px;background:#d2d2d2"></div>
<div class="r" style="left:720px;top:1175px;width:109px;height:30px;background:#fef9e3"></div>
<div class="r" style="left:831px;top:1175px;width:1405px;height:30px;background:#fff9e3"></div>
<div class="r" style="left:1262px;top:874.5px;width:14px;height:29.5px;background:#a8d1f5"></div>
<div class="r" style="left:1136px;top:1114.5px;width:154px;height:29.5px;background:#f6eac4"></div>
<div class="r" style="left:842px;top:1174.5px;width:14px;height:29.5px;background:#a8d1f5"></div>
<div class="code" style="left:842px;top:157px"><span style="color:#808000">#include</span> <span style="color:#008000;font-weight:700">&lt;jni.h&gt;</span><br><span style="color:#808000">#include</span> <span style="color:#008000;font-weight:700">&lt;string&gt;</span><br><span style="color:#808000">#include</span> <span style="color:#008000;font-weight:700">&lt;cstdlib&gt;</span><br><span style="color:#808000">#include</span> <span style="color:#008000;font-weight:700">&lt;cstring&gt;</span><br><span style="color:#808000">#include</span> <span style="color:#008000;font-weight:700">&lt;feather/net.h&gt;</span><br>&nbsp;<br>&nbsp;<br><span style="color:#000080;font-weight:700">extern</span> <span style="color:#008000;font-weight:700">"C"</span><br><span style="color:#1f542e;font-weight:700">JNIEXPORT</span> <span style="color:#371f80">jstring</span><br>&nbsp;<br><span style="color:#1f542e;font-weight:700">JNICALL</span><br>Java_com_tencent_lan_feather_MainActivity_stringFromJNI(<br>        <span style="color:#371f80">JNIEnv</span> <svg class="ast" width="14" height="30" viewBox="0 0 14 30"><path d="M7 6.6V20M1.2 9.9L12.8 16.6M1.2 16.6L12.8 9.9" stroke="currentColor" stroke-width="1.8"/></svg>env,<br>        <span style="color:#371f80">jobject</span> <span style="color:#808080;font-style:italic">/<svg class="ast" width="14" height="30" viewBox="0 0 14 30"><path d="M7 6.6V20M1.2 9.9L12.8 16.6M1.2 16.6L12.8 9.9" stroke="currentColor" stroke-width="1.8"/></svg> this <svg class="ast" width="14" height="30" viewBox="0 0 14 30"><path d="M7 6.6V20M1.2 9.9L12.8 16.6M1.2 16.6L12.8 9.9" stroke="currentColor" stroke-width="1.8"/></svg>/</span>) {<br>    <span style="color:#008080">std</span>::<span style="color:#371f80">string</span> hello = <span style="color:#008000;font-weight:700">"Hello from C++"</span>;<br>    <span style="color:#000080;font-weight:700">return</span> env-&gt;NewStringUTF(hello.c_str());<br>}<br>&nbsp;<br><span style="color:#000080;font-weight:700">extern</span> <span style="color:#008000;font-weight:700">"C"</span><br><span style="color:#1f542e;font-weight:700">JNIEXPORT</span> <span style="color:#000080;font-weight:700">void</span><br><span style="color:#1f542e;font-weight:700">JNICALL</span><br>Java_com_tencent_lan_feather_MainActivity_initFeatherNet(<br>        <span style="color:#371f80">JNIEnv</span> <svg class="ast" width="14" height="30" viewBox="0 0 14 30"><path d="M7 6.6V20M1.2 9.9L12.8 16.6M1.2 16.6L12.8 9.9" stroke="currentColor" stroke-width="1.8"/></svg>env,<br>        <span style="color:#371f80">jobject</span>,<br>        <span style="color:#371f80">jbyteArray</span> modelData) {<br>    <span style="color:#371f80">jsize</span> modelDataLen = env-&gt;GetArrayLength(modelData);<br>    <span style="color:#371f80">jbyte</span> <svg class="ast" width="14" height="30" viewBox="0 0 14 30"><path d="M7 6.6V20M1.2 9.9L12.8 16.6M1.2 16.6L12.8 9.9" stroke="currentColor" stroke-width="1.8"/></svg>modelDataElem = env-&gt;GetByteArrayElements(modelData, <span style="color:#1f542e;font-weight:700">NULL</span>);<br>    <span style="color:#000080;font-weight:700">char</span> <svg class="ast" width="14" height="30" viewBox="0 0 14 30"><path d="M7 6.6V20M1.2 9.9L12.8 16.6M1.2 16.6L12.8 9.9" stroke="currentColor" stroke-width="1.8"/></svg>buffer = (<span style="color:#000080;font-weight:700">char</span><svg class="ast" width="14" height="30" viewBox="0 0 14 30"><path d="M7 6.6V20M1.2 9.9L12.8 16.6M1.2 16.6L12.8 9.9" stroke="currentColor" stroke-width="1.8"/></svg>) malloc(<span style="color:#000080;font-weight:700">sizeof</span>(<span style="color:#000080;font-weight:700">char</span>) <svg class="ast" width="14" height="30" viewBox="0 0 14 30"><path d="M7 6.6V20M1.2 9.9L12.8 16.6M1.2 16.6L12.8 9.9" stroke="currentColor" stroke-width="1.8"/></svg> modelDataLen);<br>    memcpy(buffer, modelDataElem, <span style="color:#000080;font-weight:700">sizeof</span>(<span style="color:#000080;font-weight:700">char</span>) <svg class="ast" width="14" height="30" viewBox="0 0 14 30"><path d="M7 6.6V20M1.2 9.9L12.8 16.6M1.2 16.6L12.8 9.9" stroke="currentColor" stroke-width="1.8"/></svg> modelDataLen);<br>    env-&gt;ReleaseByteArrayElements(modelData, modelDataElem, <span style="color:#0000ff">0</span>);<br>    <span style="color:#808080;font-style:italic">/<svg class="ast" width="14" height="30" viewBox="0 0 14 30"><path d="M7 6.6V20M1.2 9.9L12.8 16.6M1.2 16.6L12.8 9.9" stroke="currentColor" stroke-width="1.8"/></svg> Init feather net <svg class="ast" width="14" height="30" viewBox="0 0 14 30"><path d="M7 6.6V20M1.2 9.9L12.8 16.6M1.2 16.6L12.8 9.9" stroke="currentColor" stroke-width="1.8"/></svg>/</span><br>    <span style="color:#000080;font-weight:700">int</span> num_threads = <span style="color:#0000ff">1</span>;<br>    <span style="color:#008080">feather</span>::<span style="color:#008080">Net</span> net(num_threads);<br>    net.InitFromBuffer(buffer);<br>}</div>
<div class="lnum" style="left:720px;top:157px;width:38px"><div>1</div><div>2</div><div>3</div><div>4</div><div>5</div><div>6</div><div>7</div><div>8</div><div>9</div><div>10</div><div>11</div><div>12</div><div>13</div><div>14</div><div>15</div><div>16</div><div>17</div><div>18</div><div>19</div><div>20</div><div>21</div><div>22</div><div>23</div><div>24</div><div>25</div><div>26</div><div>27</div><div>28</div><div>29</div><div>30</div><div>31</div><div>32</div><div>33</div><div>34</div><div>35</div></div>
<div class="r" style="left:855px;top:1174.5px;width:3.5px;height:29.5px;background:#000"></div>
<svg class="r" style="left:968px;top:511px" width="98" height="5"><path d="M0 3.5L2 0.8L4 3.5L6 0.8L8 3.5L10 0.8L12 3.5L14 0.8L16 3.5L18 0.8L20 3.5L22 0.8L24 3.5L26 0.8L28 3.5L30 0.8L32 3.5L34 0.8L36 3.5L38 0.8L40 3.5L42 0.8L44 3.5L46 0.8L48 3.5L50 0.8L52 3.5L54 0.8L56 3.5L58 0.8L60 3.5L62 0.8L64 3.5L66 0.8L68 3.5L70 0.8L72 3.5L74 0.8L76 3.5L78 0.8L80 3.5L82 0.8L84 3.5L86 0.8L88 3.5L90 0.8L92 3.5L94 0.8L96 3.5L98 0.8L100 3.5" fill="none" stroke="#8fcf8f" stroke-width="1"/></svg>
<svg class="r" style="left:968px;top:811px" width="98" height="5"><path d="M0 3.5L2 0.8L4 3.5L6 0.8L8 3.5L10 0.8L12 3.5L14 0.8L16 3.5L18 0.8L20 3.5L22 0.8L24 3.5L26 0.8L28 3.5L30 0.8L32 3.5L34 0.8L36 3.5L38 0.8L40 3.5L42 0.8L44 3.5L46 0.8L48 3.5L50 0.8L52 3.5L54 0.8L56 3.5L58 0.8L60 3.5L62 0.8L64 3.5L66 0.8L68 3.5L70 0.8L72 3.5L74 0.8L76 3.5L78 0.8L80 3.5L82 0.8L84 3.5L86 0.8L88 3.5L90 0.8L92 3.5L94 0.8L96 3.5L98 0.8L100 3.5" fill="none" stroke="#8fcf8f" stroke-width="1"/></svg>
<svg class="r" style="left:774px;top:489px" width="22" height="20" viewBox="0 0 22 20"><path d="M0 5L6.2 0V10Z M6 3.6H17V6.3H6Z" fill="#2f9e3f"/><path d="M4 11.7H14.5V14.4H4Z M14.2 8L20.5 13L14.2 18Z" fill="#d35440"/></svg>
<svg class="r" style="left:774px;top:789px" width="22" height="20" viewBox="0 0 22 20"><path d="M0 5L6.2 0V10Z M6 3.6H17V6.3H6Z" fill="#2f9e3f"/><path d="M4 11.7H14.5V14.4H4Z M14.2 8L20.5 13L14.2 18Z" fill="#d35440"/></svg>
<svg class="r" style="left:821px;top:551px" width="18" height="21"><path d="M1 1H17V11.5L9 20L1 11.5Z" fill="#fff" stroke="#cbcbcb" stroke-width="1.8"/><path d="M4.5 8.5H13.5" stroke="#c4c4c4" stroke-width="1.6"/></svg>
<svg class="r" style="left:821px;top:639px" width="18" height="21"><path d="M1 20H17V9.5L9 1L1 9.5Z" fill="#fff" stroke="#cbcbcb" stroke-width="1.8"/><path d="M4.5 12.5H13.5" stroke="#c4c4c4" stroke-width="1.6"/></svg>
<svg class="r" style="left:821px;top:881px" width="18" height="21"><path d="M1 1H17V11.5L9 20L1 11.5Z" fill="#fff" stroke="#cbcbcb" stroke-width="1.8"/><path d="M4.5 8.5H13.5" stroke="#c4c4c4" stroke-width="1.6"/></svg>
<svg class="r" style="left:821px;top:1179px" width="18" height="21"><path d="M1 20H17V9.5L9 1L1 9.5Z" fill="#fff" stroke="#cbcbcb" stroke-width="1.8"/><path d="M4.5 12.5H13.5" stroke="#c4c4c4" stroke-width="1.6"/></svg>
<div class="r" style="left:812px;top:875px;width:2px;height:330px;background:#6b7d9a"></div>
<div class="r" style="left:834px;top:210px;width:367px;height:98px;border:5.5px solid #1fa8d6;border-radius:11px;box-sizing:border-box"></div>
<div class="r" style="left:827px;top:677px;width:1018px;height:570px;border:6px solid #1fa8d6;border-radius:11px;box-sizing:border-box"></div>
<div class="r" style="left:258px;top:741px;width:268px;height:58px;border:6px solid #1fa8d6;border-radius:11px;box-sizing:border-box"></div>
</body></html>
